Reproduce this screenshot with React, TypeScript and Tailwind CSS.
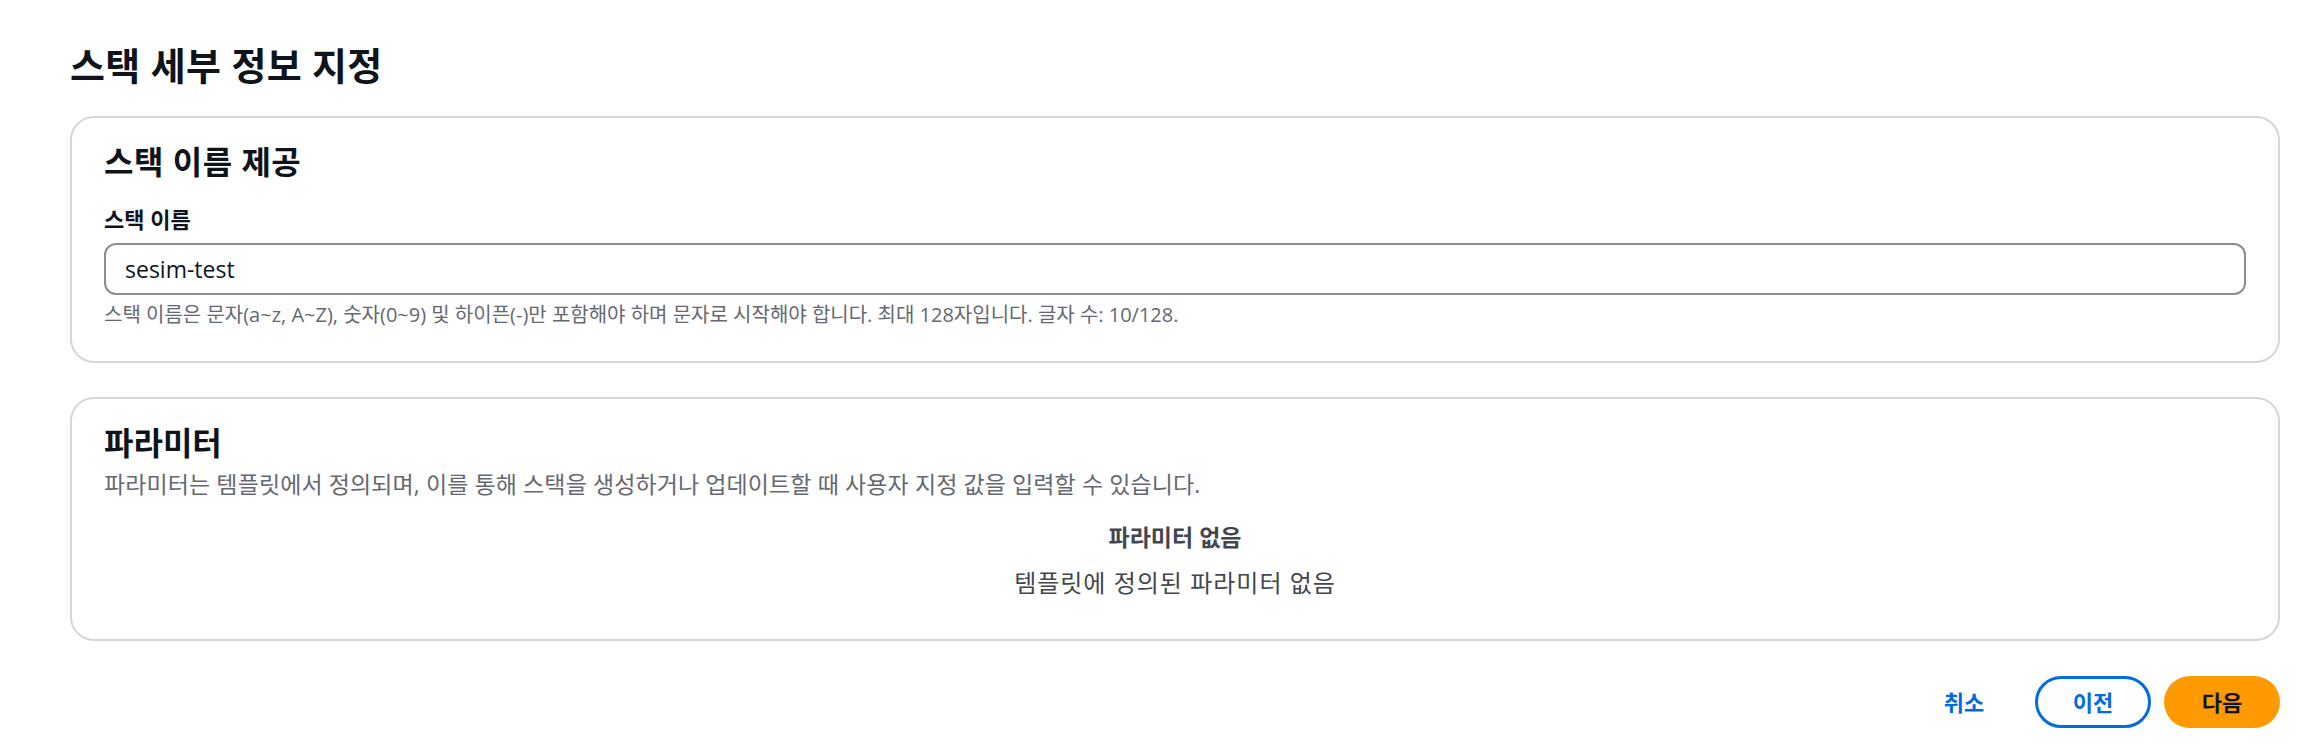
import React from 'react';

const font = { fontFamily: '"Open Sans", "Noto Sans CJK KR", sans-serif' };

const App: React.FC = () => {
  return (
    <div className="min-h-screen bg-white pl-[70px] pr-[40px] pt-[42px] text-[#0f141a]" style={font}>
      <h1 className="h-[46px] text-[38px] leading-[46px] font-bold tracking-[0.3px]">스택 세부 정보 지정</h1>

      {/* 스택 이름 */}
      <section className="mt-[28px] rounded-[24px] border-2 border-[#d5d6db] bg-white px-8 pt-[25px] pb-[33px]">
        <h2 className="text-[32px] leading-[38px] font-bold tracking-[0.5px]">스택 이름 제공</h2>
        <label className="mt-[24px] block text-[22px] leading-[28px] font-bold">스택 이름</label>
        <div className="mt-[10px] flex h-[52px] items-center rounded-[12px] border-2 border-[#8c8c94] pl-[19px]">
          <span className="text-[23px] leading-[28px]">sesim-test</span>
        </div>
        <p className="mt-[7px] text-[20px] leading-[26px] text-[#656871]">
          스택 이름은 문자(a~z, A~Z), 숫자(0~9) 및 하이픈(-)만 포함해야 하며 문자로 시작해야 합니다. 최대 128자입니다. 글자 수: 10/128.
        </p>
      </section>

      {/* 파라미터 */}
      <section className="mt-[34px] rounded-[24px] border-2 border-[#d5d6db] bg-white px-8 pt-[25px] pb-[41px]">
        <h2 className="text-[32px] leading-[38px] font-bold">파라미터</h2>
        <p className="mt-[7px] text-[23px] leading-[30px] tracking-[0.1px] text-[#656871]">
          파라미터는 템플릿에서 정의되며, 이를 통해 스택을 생성하거나 업데이트할 때 사용자 지정 값을 입력할 수 있습니다.
        </p>
        <div className="mt-[23px] flex flex-col items-center text-[#424650]">
          <span className="text-[23px] leading-[30px] font-bold">파라미터 없음</span>
          <span className="mt-[16px] text-[24px] leading-[30px] tracking-[1px]">템플릿에 정의된 파라미터 없음</span>
        </div>
      </section>

      <div className="mt-[35px] flex justify-end gap-[13px]">
        <button className="h-[52px] w-[116px] rounded-full text-[22px] font-bold text-[#006ce0]">취소</button>
        <button className="h-[52px] w-[116px] rounded-full border-[3px] border-[#006ce0] text-[22px] font-bold text-[#006ce0]">
          이전
        </button>
        <button className="h-[52px] w-[116px] rounded-full bg-[#ff9900] text-[22px] font-bold text-[#0f141a]">다음</button>
      </div>
    </div>
  );
};

export default App;
